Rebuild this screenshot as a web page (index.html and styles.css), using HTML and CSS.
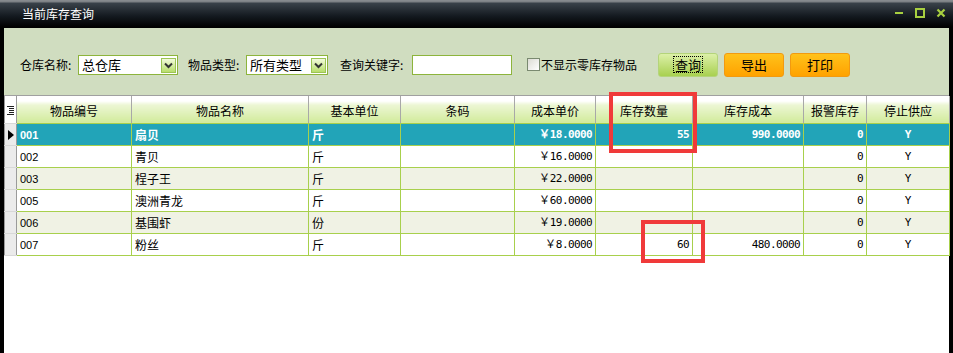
FILE: index.html
```html
<!DOCTYPE html>
<html lang="zh-CN">
<head>
    <meta charset="UTF-8">
    <title>当前库存查询</title>
    <link rel="stylesheet" href="styles.css">
</head>
<body>
    <div class="window">
        <div class="titlebar">
            <span class="title">当前库存查询</span>
            <div class="win-ctrls">
                <svg width="10" height="10" viewBox="0 0 10 10"><rect x="1" y="4" width="8" height="2" fill="#a8d040"/></svg>
                <svg width="10" height="10" viewBox="0 0 10 10"><rect x="1" y="1" width="8" height="8" fill="none" stroke="#a8d040" stroke-width="2"/></svg>
                <svg width="10" height="10" viewBox="0 0 10 10"><path d="M1.5 1.5 L8.5 8.5 M8.5 1.5 L1.5 8.5" stroke="#a8d040" stroke-width="2.2"/></svg>
            </div>
        </div>
        <div class="frame">
            <div class="toolbar">
                <span class="lbl lbl-store">仓库名称:</span>
                <div class="combo combo-store">
                    <span class="combo-text">总仓库</span>
                    <span class="drop"><svg width="9" height="7" viewBox="0 0 9 7"><path d="M1 1.5 L4.5 5 L8 1.5" fill="none" stroke="#333" stroke-width="2"/></svg></span>
                </div>
                <span class="lbl lbl-type">物品类型:</span>
                <div class="combo combo-type">
                    <span class="combo-text">所有类型</span>
                    <span class="drop"><svg width="9" height="7" viewBox="0 0 9 7"><path d="M1 1.5 L4.5 5 L8 1.5" fill="none" stroke="#333" stroke-width="2"/></svg></span>
                </div>
                <span class="lbl lbl-key">查询关键字:</span>
                <div class="textbox"></div>
                <span class="check"></span>
                <span class="check-text">不显示零库存物品</span>
                <button class="btn btn-green" type="button"><span class="focus">查询</span></button>
                <button class="btn btn-orange" type="button">导出</button>
                <button class="btn btn-orange" type="button">打印</button>
            </div>
            <div class="grid">
                <table>
                    <colgroup>
                        <col style="width:12px"><col style="width:115px"><col style="width:177px"><col style="width:92px"><col style="width:114px">
                        <col style="width:81px"><col style="width:97px"><col style="width:111px"><col style="width:63px"><col style="width:83px">
                    </colgroup>
                    <thead>
                        <tr>
                            <th class="ind"><svg width="7" height="9" viewBox="0 0 7 9"><path d="M0 .5h7M2 2.5h5M2 4.5h5M2 6.5h5M0 8.5h7" stroke="#222" stroke-width="1"/></svg></th>
                            <th>物品编号</th><th>物品名称</th><th>基本单位</th><th>条码</th><th>成本单价</th>
                            <th>库存数量</th><th>库存成本</th><th>报警库存</th><th>停止供应</th>
                        </tr>
                    </thead>
                    <tbody>
                        <tr class="selected">
                            <td class="ind"><svg width="6" height="10" viewBox="0 0 6 10"><path d="M0 0 L6 5 L0 10 Z" fill="#000"/></svg></td>
                            <td class="code">001</td><td>扇贝</td><td>斤</td><td></td><td class="num">￥18.0000</td>
                            <td class="num">55</td><td class="num">990.0000</td><td class="num">0</td><td class="mid">Y</td>
                        </tr>
                        <tr>
                            <td class="ind"></td><td class="code">002</td><td>青贝</td><td>斤</td><td></td><td class="num">￥16.0000</td>
                            <td></td><td></td><td class="num">0</td><td class="mid">Y</td>
                        </tr>
                        <tr class="alt">
                            <td class="ind"></td><td class="code">003</td><td>桯子王</td><td>斤</td><td></td><td class="num">￥22.0000</td>
                            <td></td><td></td><td class="num">0</td><td class="mid">Y</td>
                        </tr>
                        <tr>
                            <td class="ind"></td><td class="code">005</td><td>澳洲青龙</td><td>斤</td><td></td><td class="num">￥60.0000</td>
                            <td></td><td></td><td class="num">0</td><td class="mid">Y</td>
                        </tr>
                        <tr class="alt">
                            <td class="ind"></td><td class="code">006</td><td>基围虾</td><td>份</td><td></td><td class="num">￥19.0000</td>
                            <td></td><td></td><td class="num">0</td><td class="mid">Y</td>
                        </tr>
                        <tr>
                            <td class="ind"></td><td class="code">007</td><td>粉丝</td><td>斤</td><td></td><td class="num">￥8.0000</td>
                            <td class="num">60</td><td class="num">480.0000</td><td class="num">0</td><td class="mid">Y</td>
                        </tr>
                    </tbody>
                </table>
            </div>
        </div>
        <div class="mark mark-head"></div>
        <div class="mark mark-cell"></div>
    </div>
</body>
</html>
```

FILE: styles.css
```css
body {
    margin: 0;
    padding: 0;
    background-color: #ffffff;
    font-family: "Noto Sans CJK SC", "Liberation Sans", sans-serif;
    font-size: 12px;
    color: #000000;
}

.window {
    position: relative;
    width: 953px;
    height: 353px;
    overflow: hidden;
    display: flex;
    flex-direction: column;
}

.titlebar {
    height: 28px;
    flex-shrink: 0;
    display: flex;
    align-items: center;
    justify-content: space-between;
    background: linear-gradient(#8a8e92 0, #7a7e82 2px, #3a424a 3px, #141a20 16px, #000000 27px);
    padding: 0 7px 0 22px;
}

.title {
    color: #ffffff;
    font-size: 12px;
    line-height: 14px;
    margin-top: -1px;
}

.win-ctrls {
    display: flex;
    gap: 11px;
    margin-top: -2px;
}

.frame {
    flex: 1;
    border-left: 4px solid #000000;
    border-right: 4px solid #000000;
    background-color: #ffffff;
}

.toolbar {
    height: 67px;
    box-sizing: border-box;
    background-color: #d0ddc0;
    display: flex;
    align-items: flex-start;
    padding: 27px 0 0 16px;
    line-height: 20px;
}

.lbl {
    height: 20px;
}

.lbl-store {
    width: 58px;
}

.lbl-type {
    width: 58px;
    margin-left: 10px;
}

.lbl-key {
    width: 72px;
    margin-left: 12px;
}

.combo {
    height: 20px;
    box-sizing: border-box;
    border: 1px solid #8db43c;
    background-color: #ffffff;
    display: flex;
    align-items: center;
    justify-content: space-between;
    padding: 0 1px 0 3px;
}

.combo-store {
    width: 100px;
}

.combo-type {
    width: 82px;
}

.combo-text {
    line-height: 16px;
    font-size: 13px;
}

.drop {
    width: 15px;
    height: 15px;
    box-sizing: border-box;
    border: 1px solid #9cc454;
    background: linear-gradient(#f2fadc, #b8de6a);
    display: flex;
    align-items: center;
    justify-content: center;
}

.textbox {
    width: 100px;
    height: 20px;
    box-sizing: border-box;
    border: 1px solid #8db43c;
    background-color: #ffffff;
}

.check {
    width: 13px;
    height: 13px;
    box-sizing: border-box;
    margin: 3px 1px 0 15px;
    border: 1px solid #7a8a70;
    background: linear-gradient(135deg, #dcdcd4, #ffffff);
}

.check-text {
    font-size: 12px;
}

.btn {
    width: 60px;
    height: 24px;
    margin-top: -2px;
    box-sizing: border-box;
    border-radius: 3px;
    font-family: "Noto Sans CJK SC", sans-serif;
    font-size: 13px;
    line-height: 18px;
    padding: 0;
    cursor: pointer;
    color: #000000;
}

.btn-green {
    margin-left: 21px;
    border: 1px solid #b4d47a;
    background: linear-gradient(#dcf0a8, #a8d050);
}

.btn-orange {
    margin-left: 6px;
    border: 1px solid #f29a10;
    background: linear-gradient(#ffc21a, #ffa200);
}

.focus {
    display: inline-block;
    outline: 1px dotted #000000;
    padding: 0 1px;
    line-height: 15px;
}

.grid {
    border-top: 1px solid #a0a0a0;
}

table {
    border-collapse: collapse;
    table-layout: fixed;
    width: 945px;
}

th {
    height: 25px;
    padding: 0;
    font-weight: normal;
    font-size: 12px;
    background: linear-gradient(#ffffff 0, #ffffff 5px, #ecf6d4 9px, #d4eca0 25px);
    border-right: 1px solid #a8a8a8;
    border-bottom: 1px solid #a8d04c;
    line-height: 14px;
    padding-top: 2px;
}

td {
    height: 21px;
    padding: 0 3px;
    border-right: 1px solid #a8d04c;
    border-bottom: 1px solid #a8d04c;
    white-space: nowrap;
    overflow: hidden;
    line-height: 14px;
}

tbody tr {
    background-color: #ffffff;
}

tbody tr.alt {
    background-color: #f0f2e4;
}

tbody tr.selected {
    background-color: #22a4b8;
    color: #ffffff;
    font-weight: bold;
}

.ind {
    padding: 0;
    text-align: center;
    background: #ebebeb;
    border-left: 1px solid #9a9a9a;
    border-right: 1px solid #9a9a9a;
    border-bottom: 1px solid #d8d8d8;
}

th.ind {
    background: #ffffff;
    border-bottom: 1px solid #d8d8d8;
}

.code {
    font-family: "Liberation Sans", sans-serif;
    font-size: 11px;
}

.num {
    text-align: right;
    font-family: "DejaVu Sans Mono", monospace;
    font-size: 11px;
    letter-spacing: -0.6px;
}

.mid {
    text-align: center;
    font-family: "DejaVu Sans Mono", monospace;
    font-size: 11px;
}

.mark {
    position: absolute;
    border: 4px solid #f03a3a;
    box-sizing: border-box;
}

.mark-head {
    left: 609px;
    top: 92px;
    width: 88px;
    height: 61px;
}

.mark-cell {
    left: 641px;
    top: 220px;
    width: 64px;
    height: 43px;
}
```
